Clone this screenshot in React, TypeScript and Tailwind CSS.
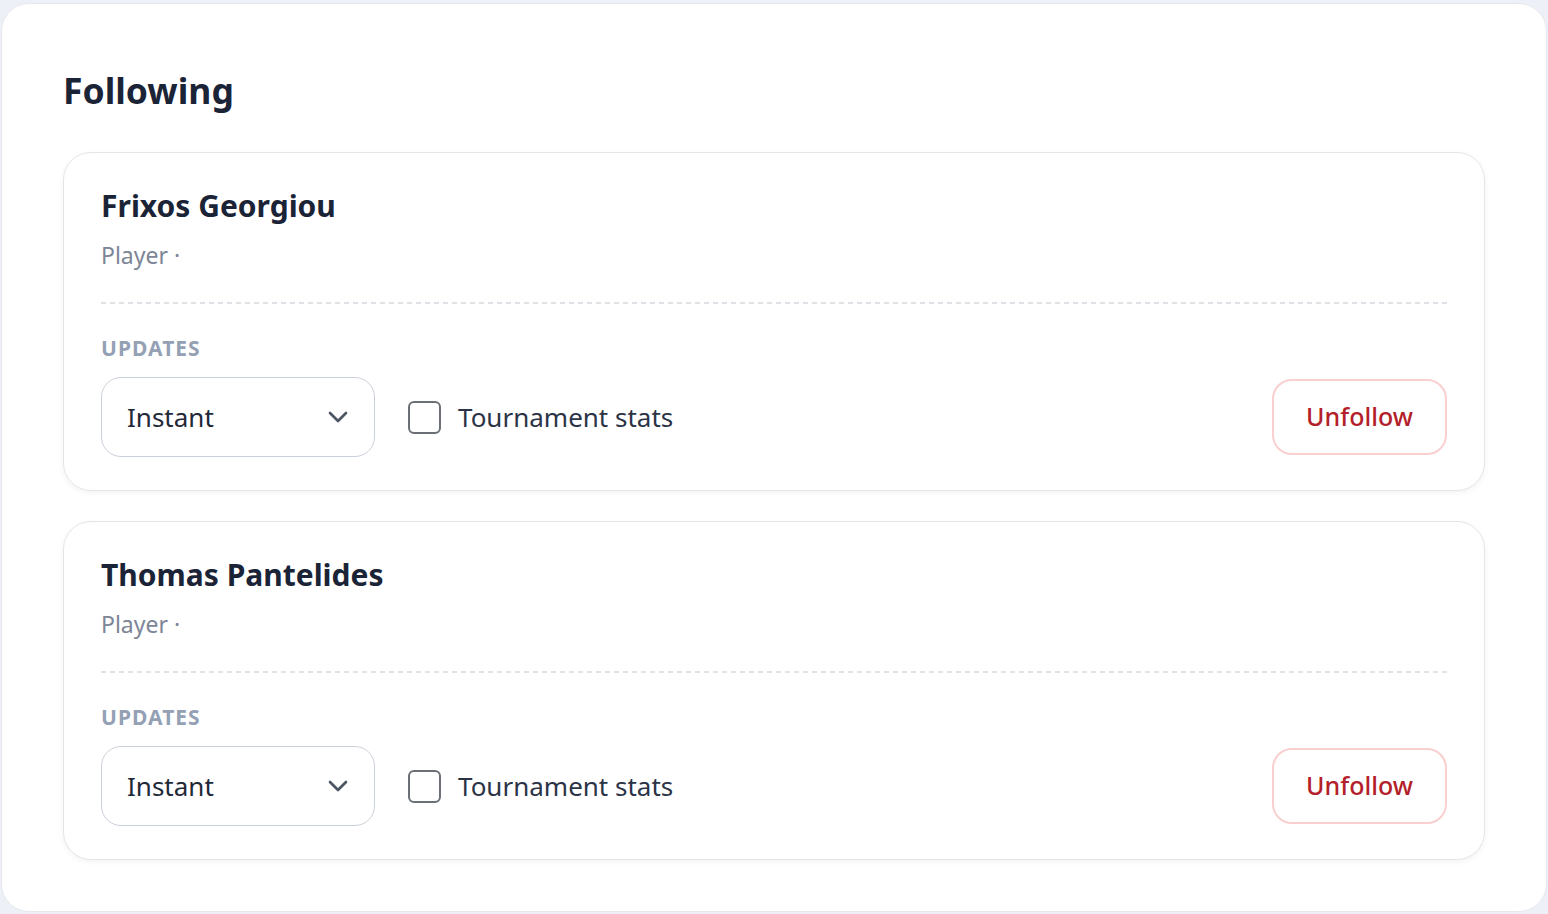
import { ChevronDown } from 'lucide-react';

const FOLLOWS = [
  { id: 1, name: 'Frixos Georgiou', role: 'Player' },
  { id: 2, name: 'Thomas Pantelides', role: 'Player' },
];

function FollowCard({ name, role }: { name: string; role: string }) {
  return (
    <div className="rounded-[28px] border border-[#e3e5ea] bg-white px-[37px] pt-[33px] pb-[33px] shadow-[0_2px_6px_rgba(15,23,42,0.05)]">
      <div className="text-[30px] font-bold leading-[40px] text-[#1b2436]">{name}</div>
      <div className="mt-[14px] text-[23px] leading-[30px] text-[#7d8596]">{role} ·</div>
      <div className="mt-[32px] h-[2px] bg-[repeating-linear-gradient(to_right,#dfe2e7_0_5px,transparent_5px_9px)]" />
      <div className="mt-[31px] text-[21px] font-bold leading-[26px] tracking-[0.05em] text-[#94a0b4]">UPDATES</div>
      <div className="mt-[16px] flex items-center">
        <div className="flex h-[80px] w-[274px] items-center justify-between rounded-[20px] border-[1.5px] border-[#cbd1da] pl-[25px] pr-[20px]">
          <span className="text-[26px] text-[#1f2937]">Instant</span>
          <ChevronDown className="h-[32px] w-[32px] text-[#4b5563]" strokeWidth={2} />
        </div>
        <div className="ml-[33px] flex items-center gap-[17px]">
          <div className="h-[33px] w-[33px] rounded-[6px] border-2 border-[#6b6f76] bg-white" />
          <span className="text-[26px] text-[#2b3446]">Tournament stats</span>
        </div>
        <button className="ml-auto flex h-[76px] w-[175px] items-center justify-center rounded-[20px] border-2 border-[#f9cfd0] bg-white text-[25px] font-medium text-[#b3202a]">
          Unfollow
        </button>
      </div>
    </div>
  );
}

export default function App() {
  return (
    <div className="min-h-screen bg-[#eef0f7] px-px pt-[3px] pb-[2px]" style={{ fontFamily: '"Noto Sans", "Open Sans", sans-serif' }}>
      <div className="h-[909px] rounded-[28px] border border-[#e6e8ee] bg-white px-[61px] pt-[58px]">
        <h1 className="text-[35.5px] font-bold leading-[56px] text-[#1b2436]">Following</h1>
        <div className="mt-[34px] flex flex-col gap-[30px]">
          {FOLLOWS.map(f => (
            <FollowCard key={f.id} name={f.name} role={f.role} />
          ))}
        </div>
      </div>
    </div>
  );
}
